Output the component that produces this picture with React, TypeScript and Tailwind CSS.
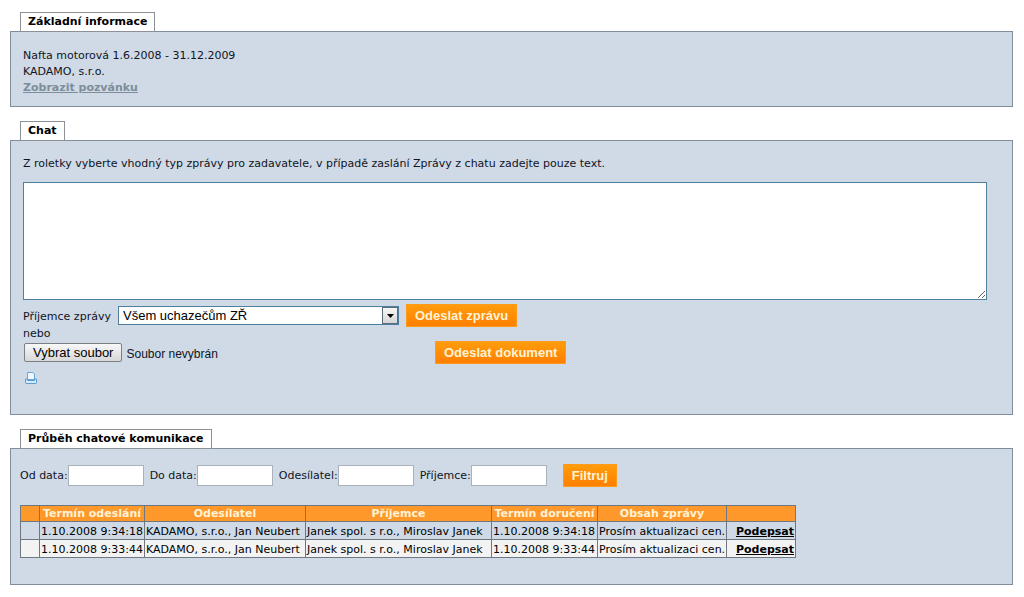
import { useState } from "react";
import type { ComponentProps, ReactNode } from "react";

type Message = {
  sent: string;
  sender: string;
  recipient: string;
  delivered: string;
  content: string;
};

const messages: Message[] = [
  {
    sent: "1.10.2008 9:34:18",
    sender: "KADAMO, s.r.o., Jan Neubert",
    recipient: "Janek spol. s r.o., Miroslav Janek",
    delivered: "1.10.2008 9:34:18",
    content: "Prosím aktualizaci cen.",
  },
  {
    sent: "1.10.2008 9:33:44",
    sender: "KADAMO, s.r.o., Jan Neubert",
    recipient: "Janek spol. s r.o., Miroslav Janek",
    delivered: "1.10.2008 9:33:44",
    content: "Prosím aktualizaci cen.",
  },
];

const filters = [
  { id: "from", label: "Od data:" },
  { id: "to", label: "Do data:" },
  { id: "sender", label: "Odesílatel:" },
  { id: "recipient", label: "Příjemce:" },
];

function Panel({ title, children }: { title: string; children: ReactNode }) {
  return (
    <section>
      <h2 className="relative z-10 -mb-px ml-[10px] h-5 w-fit border border-[#8b9196] bg-white px-[7px] text-[11px] leading-[18px] font-bold text-black">
        {title}
      </h2>
      <div className="border border-[#7f8e9c] bg-[#cfdae6]">{children}</div>
    </section>
  );
}

function OrangeButton({ children, ...rest }: ComponentProps<"button">) {
  return (
    <button
      {...rest}
      className="h-[23px] shrink-0 border border-[#ff9a1c] bg-linear-to-b from-[#ff9c0c] to-[#ff7f00] px-2 font-['Liberation_Sans',Arial,sans-serif] text-[13px] leading-5 font-bold whitespace-nowrap text-[#fff3d6]"
    >
      {children}
    </button>
  );
}

function PrinterIcon() {
  return (
    <svg width="14" height="14" viewBox="0 0 14 14" aria-hidden="true">
      <path d="M3.5 8.500V1.500h5.500l1.500 1.500v5.500z" fill="#eef7ff" stroke="#6aa6d6" />
      <path
        d="M3.500 8H1.500v3.700q0 .8.800.8h9.400q.8 0 .8-.8V8h-2v1.500h-7z"
        fill="#d3eafc"
        stroke="#5b9ccf"
      />
    </svg>
  );
}

export default function App() {
  const [fileName, setFileName] = useState("Soubor nevybrán");

  return (
    <main className="flex min-h-screen flex-col gap-[14px] bg-white pt-3 pr-[11px] pb-3 pl-[10px] font-['DejaVu_Sans',Verdana,sans-serif] text-[11px] leading-4 text-[#10141f]">
      <Panel title="Základní informace">
        <div className="px-3 pt-4 pb-[10px]">
          <p>Nafta motorová 1.6.2008 - 31.12.2009</p>
          <p>KADAMO, s.r.o.</p>
          <p>
            <a href="#pozvanka" className="font-bold text-[#7d8d99] underline">
              Zobrazit pozvánku
            </a>
          </p>
        </div>
      </Panel>

      <Panel title="Chat">
        <div className="pt-[15px] pr-[25px] pb-[29px] pl-3">
          <label htmlFor="message" className="block">
            Z roletky vyberte vhodný typ zprávy pro zadavatele, v případě zaslání Zprávy z chatu
            zadejte pouze text.
          </label>
          <textarea
            id="message"
            className="mt-[10px] block h-[118px] w-full resize border border-[#4f7f9f] bg-white p-1"
          />
          <div className="mt-1 flex items-center">
            <label htmlFor="to-whom" className="w-[95px] shrink-0 pt-0.5 whitespace-nowrap">
              Příjemce zprávy
            </label>
            <div className="relative">
              <select
                id="to-whom"
                className="block h-[19px] w-[281px] appearance-none border border-[#4f7f9f] bg-white pl-1 font-['Liberation_Sans',Arial,sans-serif] text-[13px] leading-4 text-black"
              >
                <option>Všem uchazečům ZŘ</option>
              </select>
              <span className="pointer-events-none absolute top-px right-px flex h-[17px] w-4 items-center justify-center border border-[#5c6b78] bg-linear-to-b from-[#f6f6f6] to-[#d6d6d6]">
                <svg width="7" height="4" viewBox="0 0 7 4" aria-hidden="true">
                  <path d="M0 0h7L3.500 4z" fill="#000" />
                </svg>
              </span>
            </div>
            <div className="ml-[7px] flex">
              <OrangeButton type="submit">Odeslat zprávu</OrangeButton>
            </div>
          </div>
          <p className="-mt-px">nebo</p>
          <div className="-mt-px flex items-center">
            <div className="relative flex w-[412px] items-center gap-1 pl-px font-['Liberation_Sans',Arial,sans-serif]">
              <input
                id="document"
                type="file"
                className="peer sr-only"
                onChange={(e) => setFileName(e.target.files?.[0]?.name ?? "Soubor nevybrán")}
              />
              <label
                htmlFor="document"
                className="h-[19px] rounded-xs border border-[#7d8083] bg-linear-to-b from-[#f8f8f8] to-[#d8d8d8] px-2 text-[13px] leading-[17px] whitespace-nowrap text-black peer-focus-visible:outline-2"
              >
                Vybrat soubor
              </label>
              <span className="pt-[3px] text-[12px]">{fileName}</span>
            </div>
            <OrangeButton type="submit">Odeslat dokument</OrangeButton>
          </div>
          <button type="button" aria-label="Tisk" className="mt-[7px] ml-px block">
            <PrinterIcon />
          </button>
        </div>
      </Panel>

      <Panel title="Průběh chatové komunikace">
        <div className="px-[9px] pt-[15px] pb-[26px]">
          <form className="flex items-center" onSubmit={(e) => e.preventDefault()}>
            <div className="flex gap-[6px]">
              {filters.map((f) => (
                <div key={f.id} className="flex items-center">
                  <label htmlFor={f.id} className="whitespace-nowrap">
                    {f.label}
                  </label>
                  <input
                    id={f.id}
                    type="text"
                    className="h-[21px] w-[76px] border border-[#a9b2ba] bg-white px-1"
                  />
                </div>
              ))}
            </div>
            <div className="ml-4 flex">
              <OrangeButton type="submit">Filtruj</OrangeButton>
            </div>
          </form>

          <table className="mt-[18px] w-[775px] table-fixed border-collapse text-black [&_td]:border [&_td]:border-[#6f7880] [&_td]:px-px [&_td]:pt-0.5 [&_td]:leading-[15px] [&_td]:whitespace-nowrap [&_th]:border [&_th]:border-[#6f7880] [&_th]:p-0 [&_th]:whitespace-nowrap">
            <colgroup>
              <col className="w-[19px]" />
              <col className="w-[105px]" />
              <col className="w-[161px]" />
              <col className="w-[186px]" />
              <col className="w-[106px]" />
              <col className="w-[129px]" />
              <col className="w-[69px]" />
            </colgroup>
            <thead>
              <tr className="bg-[#ff982b] leading-[15px] text-[#fff3d6]">
                <th />
                <th>Termín odeslání</th>
                <th>Odesílatel</th>
                <th>Příjemce</th>
                <th>Termín doručení</th>
                <th>Obsah zprávy</th>
                <th />
              </tr>
            </thead>
            <tbody>
              {messages.map((m) => (
                <tr key={m.sent} className="even:bg-[#f3f3f3]">
                  <td />
                  <td>{m.sent}</td>
                  <td>{m.sender}</td>
                  <td>{m.recipient}</td>
                  <td>{m.delivered}</td>
                  <td>{m.content}</td>
                  <td className="text-right">
                    <a href="#podepsat" className="font-bold underline">
                      Podepsat
                    </a>
                  </td>
                </tr>
              ))}
            </tbody>
          </table>
        </div>
      </Panel>
    </main>
  );
}
